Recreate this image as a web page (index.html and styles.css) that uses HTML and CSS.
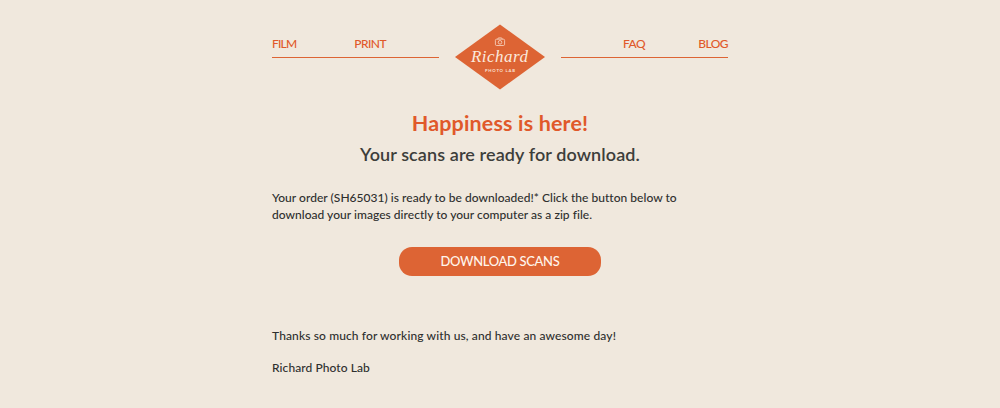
FILE: index.html
```
<!DOCTYPE html>
<html lang="en">
<head>
    <meta charset="UTF-8">
    <meta name="viewport" content="width=device-width, initial-scale=1.0">
    <title>Your scans are ready for download</title>
    <link rel="stylesheet" href="styles.css">
</head>
<body>
    <div class="container">
        <header class="header">
            <nav class="nav">
                <a href="#" class="film">FILM</a>
                <a href="#" class="print">PRINT</a>
            </nav>
            <a href="#" class="logo">
                <svg width="92" height="66" viewBox="0 0 92 66" role="img" aria-label="Richard Photo Lab">
                    <path class="logo-shape" d="M46 0.5 L91 33 L46 65.5 L1 33 Z"/>
                    <g class="logo-camera">
                        <path d="M43.6 15.2 L44.4 13.9 H47.6 L48.4 15.2"/>
                        <rect x="41.4" y="15.2" width="9.2" height="6.3" rx="1.2"/>
                        <circle cx="46" cy="18.3" r="1.8"/>
                    </g>
                    <text class="logo-name" x="45.5" y="38" textLength="57">Richard</text>
                    <text class="logo-sub" x="46" y="47.5" textLength="30">PHOTO LAB</text>
                </svg>
            </a>
            <nav class="nav">
                <a href="#" class="faq">FAQ</a>
                <a href="#" class="blog">BLOG</a>
            </nav>
        </header>

        <h1>Happiness is here!</h1>
        <h2>Your scans are ready for download.</h2>

        <p class="message">Your order (SH65031) is ready to be downloaded!* Click the button below to<br>download your images directly to your computer as a zip file.</p>

        <a href="#" class="download-button">DOWNLOAD SCANS</a>

        <p class="thanks">Thanks so much for working with us, and have an awesome day!</p>
        <p class="signature">Richard Photo Lab</p>
    </div>
</body>
</html>
```

FILE: styles.css
```
body {
    margin: 0;
    background-color: #f0e8dd;
    font-family: Lato, 'Open Sans', sans-serif;
    font-size: 12px;
    font-weight: 500;
    font-variant-ligatures: none;
    line-height: 16px;
    color: #2e2f2e;
}
.container {
    width: 456px;
    margin: 0 auto;
    padding-top: 24px;
}
.header {
    display: flex;
    justify-content: space-between;
    height: 66px;
}
.nav {
    display: flex;
    justify-content: space-between;
    box-sizing: border-box;
    width: 167px;
    height: 34px;
    padding-top: 12px;
    border-bottom: 1px solid #dd6434;
    letter-spacing: -0.55px;
}
.nav a {
    color: #e0592a;
    text-decoration: none;
}
.nav .film {
    letter-spacing: -0.8px;
}
.nav .print {
    margin-right: 53px;
}
.nav .faq {
    margin-left: 62px;
}
.logo-shape {
    fill: #dd6434;
}
.logo-camera {
    fill: none;
    stroke: #f7d9c8;
    stroke-width: 0.8;
}
.logo-name {
    fill: #fbe9dd;
    font-family: 'Liberation Serif', serif;
    font-size: 17px;
    font-style: italic;
    text-anchor: middle;
}
.logo-sub {
    fill: #fbe3d5;
    font-size: 4.2px;
    font-weight: 700;
    text-anchor: middle;
}
h1 {
    margin: 19px 0 0;
    font-size: 21.5px;
    font-weight: 700;
    letter-spacing: 0.15px;
    line-height: 28px;
    text-align: center;
    color: #e0592a;
}
h2 {
    margin: 5px 0 0;
    font-size: 18px;
    font-weight: 600;
    letter-spacing: 0.1px;
    line-height: 24px;
    text-align: center;
    color: #3d3e3b;
}
.message {
    margin: 24px 0 0;
    letter-spacing: 0.03px;
    line-height: 16.5px;
    white-space: nowrap;
}
.download-button {
    display: block;
    width: 202px;
    height: 29px;
    margin: 24px auto 0;
    border-radius: 13px;
    background-color: #dd6434;
    font-size: 13px;
    letter-spacing: -0.35px;
    line-height: 29px;
    text-align: center;
    text-decoration: none;
    color: #fff5ec;
}
.thanks {
    margin: 52px 0 0;
    letter-spacing: 0.12px;
}
.signature {
    margin: 16px 0 0;
    letter-spacing: 0.08px;
}
```
